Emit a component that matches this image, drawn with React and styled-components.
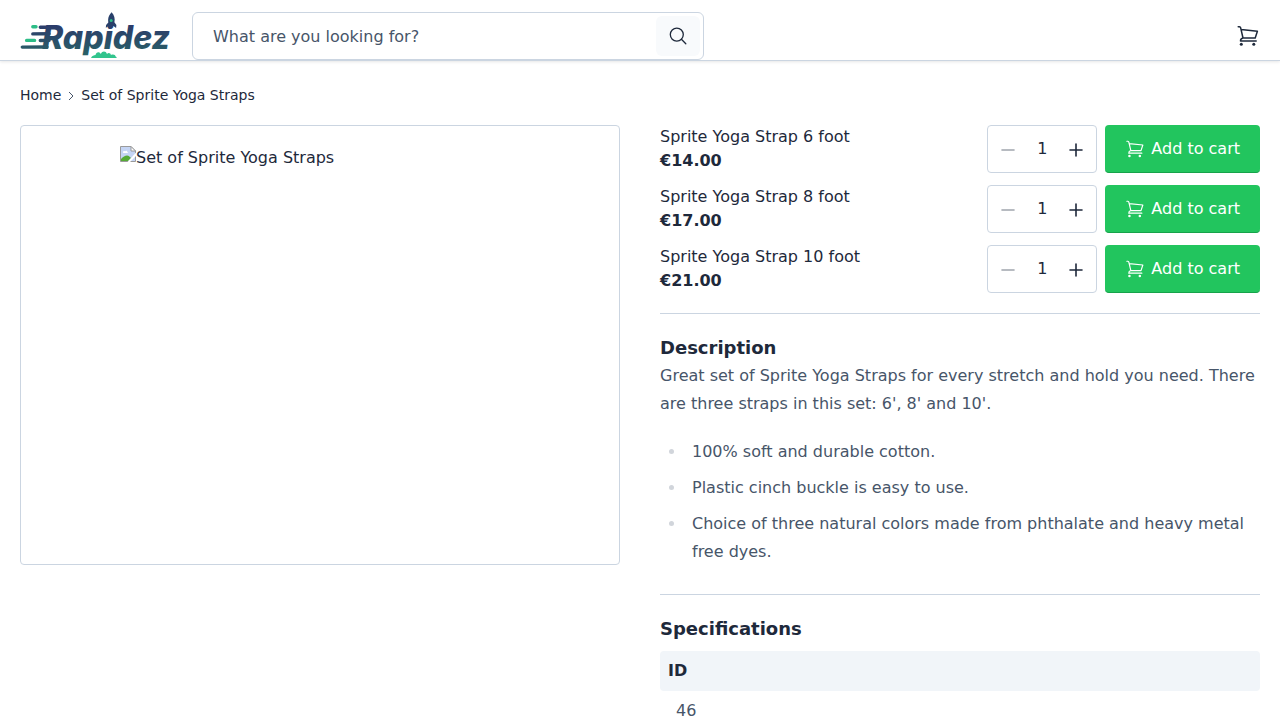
import React, { useState } from "react";
import styled, { createGlobalStyle } from "styled-components";

const GlobalStyle = createGlobalStyle`
  *, *::before, *::after { box-sizing: border-box; }
  body {
    margin: 0;
    background: #fff;
    color: #1e293b;
    font-family: "DejaVu Sans", sans-serif;
    font-size: 16px;
    line-height: 24px;
  }
  a { color: inherit; text-decoration: none; }
  button, input { font: inherit; color: inherit; }
  button { cursor: pointer; }
  svg { display: block; flex-shrink: 0; }
`;

const Header = styled.header`
  display: flex;
  align-items: flex-start;
  gap: 22px;
  padding: 12px 20px 0;
  border-bottom: 1px solid #cbd5e1;
  box-shadow: 0 1px 3px rgba(0, 0, 0, 0.1);
`;

const SearchForm = styled.form`
  display: flex;
  flex: 1;
  max-width: 512px;
  height: 48px;
  padding: 3px;
  border: 1px solid #cbd5e1;
  border-radius: 6px;
`;

const SearchInput = styled.input`
  flex: 1;
  min-width: 0;
  padding: 2px 17px 0;
  border: 0;
  outline: 0;
  background: transparent;
  &::placeholder { color: #475569; opacity: 1; }
`;

const SearchButton = styled.button`
  display: grid;
  place-items: center;
  width: 44px;
  padding: 0;
  border: 0;
  border-radius: 6px;
  background: #f8fafc;
`;

const CartLink = styled.a`
  display: flex;
  align-items: center;
  height: 48px;
  margin-left: auto;
`;

const Main = styled.main`
  padding: 24px 20px;
`;

const Breadcrumbs = styled.nav`
  display: flex;
  align-items: center;
  gap: 4px;
  margin-bottom: 20px;
  font-size: 14px;
  line-height: 20px;
`;

const Product = styled.div`
  display: grid;
  grid-template-columns: 1fr 1fr;
  align-items: start;
  gap: 40px;
`;

const Gallery = styled.div`
  display: flex;
  justify-content: center;
  padding: 20px;
  border: 1px solid #cbd5e1;
  border-radius: 4px;
`;

const Photo = styled.div`
  display: flex;
  width: 400px;
  max-width: 100%;
  height: 398px;
`;

const Section = styled.section`
  padding-bottom: ${(p) => p.$space}px;
  & + & {
    padding-top: 20px;
    border-top: 1px solid #cbd5e1;
  }
`;

const Options = styled.div`
  display: flex;
  flex-direction: column;
  gap: 12px;
`;

const OptionRow = styled.form`
  display: flex;
  align-items: center;
  gap: 8px;
`;

const OptionInfo = styled.div`
  flex: 1;
`;

const Price = styled.div`
  font-weight: 700;
`;

const Quantity = styled.div`
  display: flex;
  width: 110px;
  height: 48px;
  border: 1px solid #cbd5e1;
  border-radius: 4px;
`;

const StepButton = styled.button`
  display: grid;
  place-items: center;
  width: 40px;
  padding: 2px 0 0;
  border: 0;
  background: transparent;
  color: ${(p) => (p.disabled ? "#a0a5ad" : "#1e293b")};
`;

const QuantityInput = styled.input`
  flex: 1;
  min-width: 0;
  padding: 0;
  border: 0;
  outline: 0;
  background: transparent;
  text-align: center;
`;

const AddButton = styled.button`
  display: flex;
  align-items: center;
  gap: 6px;
  height: 48px;
  padding: 0 20px;
  border: 0;
  border-bottom: 1px solid #16a34a;
  border-radius: 4px;
  background: #22c55e;
  color: #fff;
  white-space: nowrap;
`;

const Title = styled.h2`
  margin: 0;
  font-size: 18px;
  line-height: 28px;
`;

const Text = styled.p`
  margin: 0;
  color: #475569;
  line-height: 28px;
`;

const Bullets = styled.ul`
  display: flex;
  flex-direction: column;
  gap: 8px;
  margin: 20px 0 0;
  padding: 0;
  list-style: none;
  color: #475569;
  line-height: 28px;
`;

const Bullet = styled.li`
  display: flex;
  gap: 18px;
  padding-left: 9px;
  &::before {
    content: "";
    flex: none;
    width: 5px;
    height: 5px;
    margin-top: 11px;
    border-radius: 50%;
    background: #d1d5db;
  }
`;

const Specs = styled.dl`
  margin: 8px 0 0;
`;

const SpecName = styled.dt`
  padding: 8px;
  border-radius: 4px;
  background: #f1f5f9;
  font-weight: 700;
`;

const SpecValue = styled.dd`
  margin: 0;
  padding: 8px 16px;
  color: #475569;
`;

const LogoText = styled.text`
  font-family: Inter, sans-serif;
  font-size: 32px;
  font-weight: 800;
  font-style: italic;
`;

const Logo = () => (
  <svg width="150" height="46" viewBox="0 0 150 46" overflow="visible" role="img" aria-label="Rapidez">
    <defs>
      <linearGradient id="ink" gradientUnits="userSpaceOnUse" x1="0" y1="12" x2="0" y2="44">
        <stop offset="0" stopColor="#2c3a6b" />
        <stop offset="1" stopColor="#296266" />
      </linearGradient>
    </defs>
    <g stroke="url(#ink)" strokeWidth="3.4" strokeLinecap="round" fill="none">
      <path d="M20.3 15.3L32 15.2M12.8 21.9L29 21.8M20.3 28.5L29 28.4M2.3 35.1L27 35" />
    </g>
    <path d="M12.8 14.8h3.2M6.6 28.4h8" stroke="#2dbd87" strokeWidth="3.4" strokeLinecap="round" />
    <LogoText x="22" y="37" fill="url(#ink)">Rapidez</LogoText>
    <path d="M91.6.2C89.5 2.3 88.2 5 88.1 8l.2 2.4-2.2 2.5-.3 2.8 3.1-1.8h4.6l2.6 2.1.3-3-2-2.7C95.2 6.6 94.4 2.800 91.6.2Z" fill="#29406a" />
    <circle cx="91.2" cy="8.4" r="1.5" fill="#2dbd87" />
    <path d="M71 46c1-2.200 3-3 4.500-3C76 39.800 79.500 39 80.800 42c1.200-3.300 5.200-3.300 6.200 0 1.400-1.600 3.600-1 3.900 1 2.500-1 4.500-.2 4.700 1.500.7.200 1.100.7 1.100 1.500Z" fill="#32c48d" />
  </svg>
);

const CartIcon = ({ size, weight }) => (
  <svg width={size} height={size} viewBox="0 0 24 24" fill="none" stroke="currentColor" strokeWidth={weight} strokeLinecap="round" strokeLinejoin="round" aria-hidden="true">
    <path d="M2.2 2.700h1.200q1 .1 1.200 1L7 14M5.100 5.500l16.300 1.700L19.200 14H7C5.300 14.300 4.500 15.400 4.500 17h15.700" />
    <circle cx="5.300" cy="20.300" r="1.500" fill="currentColor" stroke="none" />
    <circle cx="17.800" cy="20.300" r="1.500" fill="currentColor" stroke="none" />
  </svg>
);

const SearchIcon = () => (
  <svg width="18" height="18" viewBox="0 0 18 18" fill="none" stroke="currentColor" strokeWidth="1.3" strokeLinecap="round" aria-hidden="true">
    <circle cx="7.8" cy="7.6" r="6.5" />
    <path d="M12.4 12.3l4.400 4.400" />
  </svg>
);

const ChevronIcon = () => (
  <svg width="12" height="12" viewBox="0 0 12 12" fill="none" stroke="#475569" aria-hidden="true">
    <path d="M4 3l4 4-4 4" />
  </svg>
);

const StepIcon = ({ plus }) => (
  <svg width="14" height="14" viewBox="0 0 14 14" fill="none" stroke="currentColor" strokeWidth="1.6" strokeLinecap="round" aria-hidden="true">
    <path d={plus ? "M1 7h12M7 1v12" : "M1 7h12"} />
  </svg>
);

const BrokenImageIcon = () => (
  <svg width="16" height="16" viewBox="0 0 16 16" aria-hidden="true">
    <path d="M.5.5h10.500l4.500 4.500v10.500H.5Z" fill="#c5d5f5" stroke="#9a9a9a" />
    <path d="M3 6.500c0-1.500 1.500-1.800 2-1 .8-1.500 2.500-.5 2.300.5.900 0 .9 1 .2 1H3.300Z" fill="#fff" />
    <path d="M1 15v-2c2-2 4-3.500 6-3.500 2 0 3 1.500 4 2.500l-3 3Z" fill="#56ab36" />
    <path d="M16 6.500L7.500 16H10l6-6Z" fill="#fff" />
    <path d="M11 .5V5h4.500Z" fill="#fff" stroke="#9a9a9a" />
  </svg>
);

const products = [
  { name: "Sprite Yoga Strap 6 foot", price: "€14.00" },
  { name: "Sprite Yoga Strap 8 foot", price: "€17.00" },
  { name: "Sprite Yoga Strap 10 foot", price: "€21.00" },
];

const features = [
  "100% soft and durable cotton.",
  "Plastic cinch buckle is easy to use.",
  "Choice of three natural colors made from phthalate and heavy metal free dyes.",
];

function ProductOption({ name, price }) {
  const [count, setCount] = useState(1);
  return (
    <OptionRow onSubmit={(e) => e.preventDefault()}>
      <OptionInfo>
        {name}
        <Price>{price}</Price>
      </OptionInfo>
      <Quantity>
        <StepButton type="button" aria-label="Decrease" disabled={count <= 1} onClick={() => setCount(count - 1)}>
          <StepIcon />
        </StepButton>
        <QuantityInput
          aria-label={`Quantity of ${name}`}
          inputMode="numeric"
          value={count}
          onChange={(e) => setCount(Number(e.target.value) || 1)}
        />
        <StepButton type="button" aria-label="Increase" onClick={() => setCount(count + 1)}>
          <StepIcon plus />
        </StepButton>
      </Quantity>
      <AddButton type="submit">
        <CartIcon size={20} weight={1.4} />
        Add to cart
      </AddButton>
    </OptionRow>
  );
}

export default function App() {
  return (
    <>
      <GlobalStyle />
      <Header>
        <a href="#home" aria-label="Rapidez"><Logo /></a>
        <SearchForm role="search" onSubmit={(e) => e.preventDefault()}>
          <SearchInput type="text" aria-label="Search" placeholder="What are you looking for?" />
          <SearchButton type="submit" aria-label="Search"><SearchIcon /></SearchButton>
        </SearchForm>
        <CartLink href="#cart" aria-label="Cart"><CartIcon size={24} weight={1.5} /></CartLink>
      </Header>
      <Main>
        <Breadcrumbs aria-label="Breadcrumb">
          <a href="#home">Home</a>
          <ChevronIcon />
          <a href="#product">Set of Sprite Yoga Straps</a>
        </Breadcrumbs>
        <Product>
          <Gallery>
            <Photo>
              <BrokenImageIcon />
              <span>Set of Sprite Yoga Straps</span>
            </Photo>
          </Gallery>
          <div>
            <Section $space={20}>
              <Options>
                {products.map((p) => <ProductOption key={p.name} {...p} />)}
              </Options>
            </Section>
            <Section $space={28}>
              <Title>Description</Title>
              <Text>
                Great set of Sprite Yoga Straps for every stretch and hold you need. There are three straps in this set: 6', 8' and 10'.
              </Text>
              <Bullets>
                {features.map((f) => <Bullet key={f}>{f}</Bullet>)}
              </Bullets>
            </Section>
            <Section $space={0}>
              <Title>Specifications</Title>
              <Specs>
                <SpecName>ID</SpecName>
                <SpecValue>46</SpecValue>
              </Specs>
            </Section>
          </div>
        </Product>
      </Main>
    </>
  );
}
